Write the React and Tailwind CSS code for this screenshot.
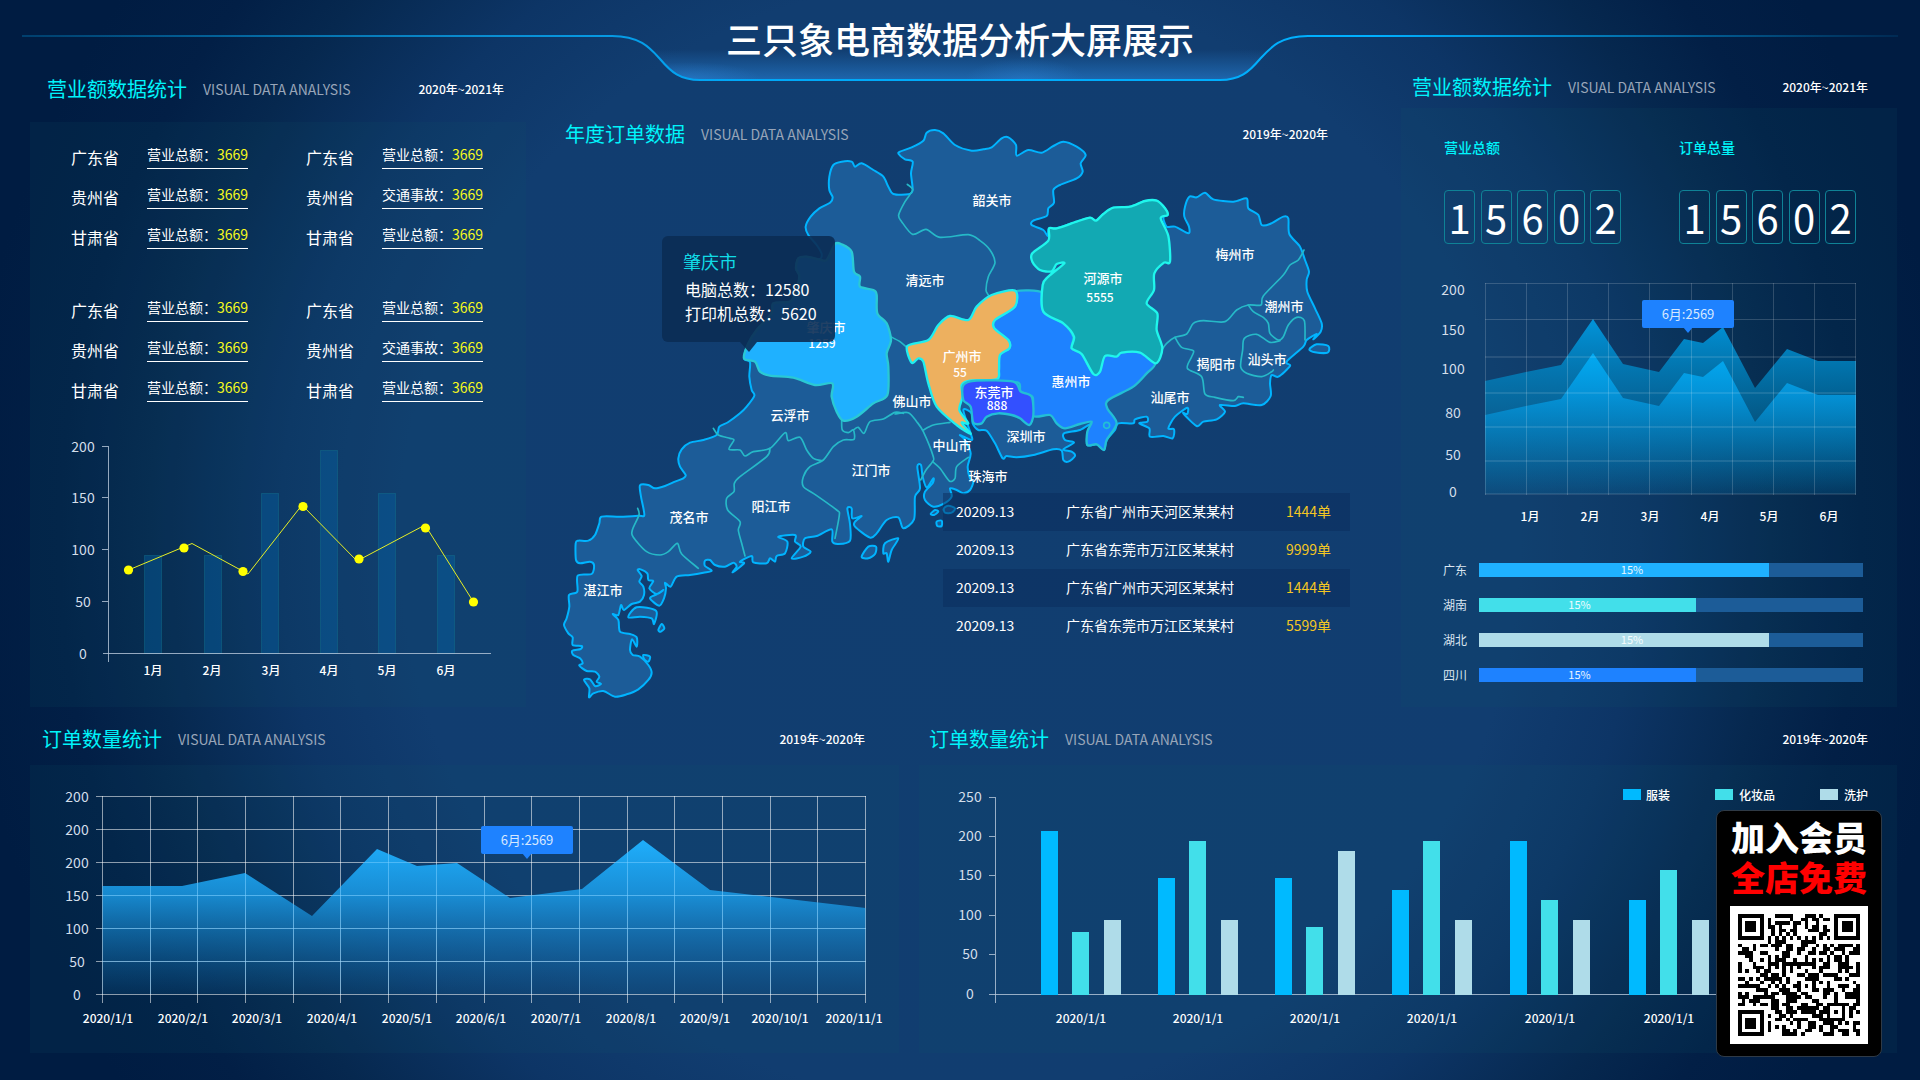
import React from "react";

const SALES = [
  [
    ["广东省", "营业总额：", "广东省", "营业总额："],
    ["贵州省", "营业总额：", "贵州省", "交通事故："],
    ["甘肃省", "营业总额：", "甘肃省", "营业总额："],
  ],
  [
    ["广东省", "营业总额：", "广东省", "营业总额："],
    ["贵州省", "营业总额：", "贵州省", "交通事故："],
    ["甘肃省", "营业总额：", "甘肃省", "营业总额："],
  ],
];

const ORDERS = [
  ["20209.13", "广东省广州市天河区某某村", "1444单"],
  ["20209.13", "广东省东莞市万江区某某村", "9999单"],
  ["20209.13", "广东省广州市天河区某某村", "1444单"],
  ["20209.13", "广东省东莞市万江区某某村", "5599单"],
];

const SHARES = [
  { name: "广东", fill: 75.5, tone: "bg-[#1fb1ff] pl-4" },
  { name: "湖南", fill: 56.5, tone: "bg-[#42dfea] pr-4" },
  { name: "湖北", fill: 75.5, tone: "bg-[#afdce9] pl-4" },
  { name: "四川", fill: 56.5, tone: "bg-[#1e82ff] pr-4" },
];

/* ---------- shared pieces ---------- */

function SectionTitle({ title, date, className = "" }) {
  return (
    <div className={"flex items-center " + className}>
      <h2 className="text-xl leading-7 text-[#00f4fb]">{title}</h2>
      <span className="ml-4 text-sm leading-7 text-[#98a5b8]">VISUAL DATA ANALYSIS</span>
      <time className="ml-auto text-xs leading-7 font-medium text-white">{date}</time>
    </div>
  );
}

function T({ x, y, children, className = "fill-white text-xs font-medium" }) {
  return (
    <text x={x} y={y} dy="0.37em" textAnchor="middle" className={className}>
      {children}
    </text>
  );
}

const AXIS = "fill-[#d3deea] text-sm";

function Flag({ x, y }) {
  return (
    <g>
      <rect x={x - 46} y={y} width="92" height="28" rx="2" fill="#1e82ff" />
      <path d={`M${x - 5} ${y + 27}h10l-5 6z`} fill="#1e82ff" />
      <T x={x} y={y + 14} className="fill-[#d6e8ff] text-[13px]">6月:2569</T>
    </g>
  );
}

const area = (pts, base) =>
  "M" + pts.map((p) => p.join(" ")).join("L") + `V${base}H${pts[0][0]}Z`;

/* ---------- header ---------- */

function Header() {
  const curve =
    "M22 36H612C640 36 650 48 660 59C671 72 680 80 700 80H1220C1240 80 1249 72 1260 59C1270 48 1280 36 1308 36H1898";
  return (
    <header className="relative flex h-[72px] justify-center">
      <svg className="absolute inset-x-0 top-0 w-full" viewBox="0 0 1920 84" aria-hidden="true">
        <defs>
          <linearGradient id="edge" gradientUnits="userSpaceOnUse" x1="22" y1="0" x2="1898" y2="0">
            <stop offset="0" stopColor="#00a8f0" stopOpacity="0.25" />
            <stop offset="0.25" stopColor="#0a9de4" stopOpacity="0.85" />
            <stop offset="0.38" stopColor="#00a8f8" />
            <stop offset="0.72" stopColor="#00b0ff" />
            <stop offset="1" stopColor="#00a8f0" stopOpacity="0.1" />
          </linearGradient>
          <linearGradient id="glow" x1="0" y1="0" x2="0" y2="1">
            <stop offset="0.3" stopColor="#2478c8" stopOpacity="0" />
            <stop offset="1" stopColor="#2478c8" stopOpacity="0.7" />
          </linearGradient>
          <radialGradient id="spot">
            <stop offset="0" stopColor="#2f8be0" stopOpacity="0.35" />
            <stop offset="1" stopColor="#2f8be0" stopOpacity="0" />
          </radialGradient>
          <clipPath id="trough">
            <path d="M612 36C640 36 650 48 660 59C671 72 680 80 700 80H1220C1240 80 1249 72 1260 59C1270 48 1280 36 1308 36Z" />
          </clipPath>
        </defs>
        <g clipPath="url(#trough)">
          <rect x="612" y="36" width="696" height="44" fill="url(#glow)" />
          <ellipse cx="1025" cy="80" rx="60" ry="22" fill="url(#spot)" />
          <ellipse cx="690" cy="78" rx="70" ry="16" fill="url(#spot)" />
        </g>
        <path d={curve} fill="none" stroke="url(#edge)" strokeWidth="2" />
      </svg>
      <h1 className="relative mt-[13px] text-4xl leading-[50px] font-medium text-white">三只象电商数据分析大屏展示</h1>
    </header>
  );
}

/* ---------- left column ---------- */

function SalesItem({ province, label }) {
  return (
    <div className="flex items-center justify-between">
      <span className="text-base leading-6">{province}</span>
      <span className="border-b border-white pb-1 text-sm leading-5">
        {label}
        <span className="text-[#f6f91c]">3669</span>
      </span>
    </div>
  );
}

function MonthlyChart() {
  const bars = [[144, 555], [204, 555], [261, 493], [320, 450], [378, 493], [437, 555]];
  const dots = [[128.5, 570], [184, 548], [243, 571.5], [303, 506.5], [359, 559], [425.5, 528], [473.5, 602]];
  const ticks = [[200, 446.5], [150, 497.5], [100, 549.5], [50, 601.5], [0, 653.5]];
  return (
    <svg className="mt-7 w-full" viewBox="30 430 496 260" role="img" aria-label="月度统计">
      {bars.map(([x, y]) => (
        <rect key={x} x={x + 0.5} y={y + 0.5} width="17" height={653 - y} fill="#0464a8" fillOpacity="0.4" stroke="#12708e" strokeOpacity="0.45" />
      ))}
      <g stroke="#b9c9dc" strokeOpacity="0.8">
        <path d="M108.5 446V662M103 653.5H491" />
        {ticks.slice(0, 4).map(([, y]) => (
          <path key={y} d={`M102 ${y}H108`} />
        ))}
      </g>
      <polyline points="128.5,570 192,543.5 248,574 302,505 357,561 425,525 473.5,602" fill="none" stroke="#e6ef25" />
      {dots.map(([x, y]) => (
        <circle key={x} cx={x} cy={y} r="4.6" fill="#ffff00" />
      ))}
      {ticks.map(([v, y]) => (
        <T key={v} x="83" y={y} className={AXIS}>{v}</T>
      ))}
      {[153, 212, 271, 329, 387, 446].map((x, i) => (
        <T key={x} x={x} y="671">{i + 1}月</T>
      ))}
    </svg>
  );
}

function LeftColumn() {
  return (
    <section className="flex flex-col">
      <SectionTitle title="营业额数据统计" date="2020年~2021年" className="h-[34px] pr-[22px] pl-[17px]" />
      <div className="mt-4 flex-1 bg-[#145a6e]/12 pt-[22px]">
        <div className="flex flex-col gap-12 pr-[43px] pl-[41px] text-white">
          {SALES.map((rows, g) => (
            <div key={g} className="grid grid-cols-2 gap-x-[58px] gap-y-[15px]">
              {rows.map(([a, b, c, d], i) => (
                <React.Fragment key={i}>
                  <SalesItem province={a} label={b} />
                  <SalesItem province={c} label={d} />
                </React.Fragment>
              ))}
            </div>
          ))}
        </div>
        <MonthlyChart />
      </div>
    </section>
  );
}

/* ---------- map ---------- */

const at = (dx, dy, s) =>
  s.trim().split(/\s+/).map((p) => {
    const [x, y] = p.split(",").map(Number);
    return [x + dx, y + dy];
  });
const north = (s) => at(0, 0, s);
const east = (s) => at(1080, 0, s);
const south = (s) => at(0, 870, s);

function smooth(pts, closed) {
  const n = pts.length;
  const get = (i) => (closed ? pts[(i + n) % n] : pts[Math.max(0, Math.min(n - 1, i))]);
  let d = `M${pts[0][0]} ${pts[0][1]}`;
  const last = closed ? n : n - 1;
  for (let i = 0; i < last; i++) {
    const [a, b, c, e] = [get(i - 1), get(i), get(i + 1), get(i + 2)];
    d += `C${(b[0] + (c[0] - a[0]) / 7).toFixed(1)} ${(b[1] + (c[1] - a[1]) / 7).toFixed(1)} ${(c[0] - (e[0] - b[0]) / 7).toFixed(1)} ${(c[1] - (e[1] - b[1]) / 7).toFixed(1)} ${c[0]} ${c[1]}`;
  }
  return closed ? d + "Z" : d;
}

const PROVINCE = [
  ...north(`880,165 868,200 868,240 878,262 870,278 838,295 812,320 797,350 805,375 830,405 845,432 838,448 800,440
    775,445 768,475 778,500 765,550 750,575 700,580 695,610 650,660 625,700 612,745 630,757 628,800 635,840 643,857 620,890`),
  ...south(`600,40 565,66 538,80 530,105 490,120 450,128 425,148 415,175 420,200 437,225 430,235 405,245 375,258 345,265
    325,255 300,256 303,290 313,345 295,347 240,350 185,350 178,370 165,405 145,422 115,422 107,430 108,480 120,490
    150,485 162,495 155,522 113,527 112,575 87,585 88,620 80,655 72,675 85,700 98,712 98,735 125,738 122,747 97,752
    100,765 120,775 128,790 118,797 140,813 165,815 178,830 170,845 183,852 165,858 150,838 132,840 148,865 147,892
    160,880 190,873 225,890 260,883 295,868 325,840 335,818 325,795 300,770 278,765 270,750 276,718 290,740 290,712
    270,702 240,695 235,660 218,642 235,645 243,615 252,630 275,612 300,605 312,585 310,560 298,545 305,528 293,510
    302,508 322,520 325,540 340,543 328,565 350,582 370,570 350,583 330,595 358,617 372,595 378,565 375,548 392,560
    410,530 450,525 490,518 515,512 495,498 495,482 510,480 525,495 555,500 580,488 590,500 578,517 612,490 600,485
    635,468 640,487 680,490 690,475 705,485 710,468 735,460 742,425 715,410 765,405 765,425 782,440 755,475 790,470
    812,455 790,440 795,415 830,408 875,388 877,425 895,432 930,422 930,372 922,325 935,325 937,355 965,348 945,365
    945,380 990,413 1010,400 1040,360 1075,352 1090,385 1122,358 1125,290 1140,265 1132,200 1143,195 1148,230
    1160,262 1180,235 1178,250 1155,275 1155,300 1180,320 1210,312 1235,290 1230,265 1250,270 1270,280 1290,270
    1300,245 1290,235 1283,200 1292,160`),
  ...east(`195,990 180,975 215,990 212,970 190,900 215,910 218,940 235,960 260,962 285,1000 308,1045 320,1038
    350,1042 400,1035 460,1018 485,1022 490,1050 505,1055 525,1038 515,1025 490,1018 522,998 495,990 492,970 540,960
    575,940 565,960 562,1005 590,1003 612,1020 620,990 645,960 655,940 700,940 705,928 740,920 742,935 718,940
    748,955 750,980 790,978 818,985 822,958 805,955 825,920 862,893 862,912 850,910 890,948 910,935 950,928 975,905
    960,885 1005,888 1030,880 1085,885 1112,858 1110,820 1115,795 1135,800 1170,768 1160,755 1210,710 1220,690
    1250,672 1240,688 1262,665 1265,640 1245,595 1222,545 1220,510 1227,485 1215,450 1200,410 1168,372 1165,325
    1150,320 1110,342 1085,345 1075,315 1045,295 1040,265 1000,275 940,268 915,248 890,262 868,260 855,290 853,320
    867,350 865,370 825,350 800,350 790,322 803,315 795,295 770,272 735,273 690,290 640,293 610,312 588,332 570,323
    530,335 470,355 447,355 443,378 430,360 395,345 400,332 440,318 445,295 462,278 460,240 480,225 530,205 548,185
    542,160 557,135 530,110 490,95 460,108 425,128 385,120 350,137 348,105 325,82 305,85 275,112 250,118 215,122
    165,105 130,70 105,60 80,68 70,92 35,112 0,125 -4,132 15,148 38,155 33,190 38,240 25,253`),
  ...north("1060,252 1045,230 1030,200 1000,180 965,160 945,170 935,155 905,155"),
];

const BORDERS = [
  east("22,223 38,240 15,275 -4,315 5,335 38,373 78,358 120,382 205,374 240,392 270,420 285,458 265,500 258,540 265,555"),
  east("345,545 400,545 428,552"),
  east("785,720 800,700 825,682 860,672 880,640 910,632 975,635 1010,600 1045,585 1083,585 1090,558 1150,495 1170,465 1195,450 1212,420"),
  east("1045,585 1060,605 1090,622 1105,640 1110,670 1135,690 1150,680 1165,645 1190,622 1213,632 1215,690"),
  east("1140,692 1110,697 1070,673 1033,685 1028,720 1022,770 1040,790 1085,800 1115,785 1120,780"),
  east("825,682 845,712 880,722 875,740 862,775 905,800 915,852 945,862 1000,872 1015,860 1030,862"),
  east("-15,912 25,908 50,935 70,965 100,1040 98,1055 78,1080 62,1110"),
  east("70,960 100,945 150,937"),
  east("98,1055 120,1075 148,1113 165,1105 170,1070 205,1042"),
  north("1052,680 1080,695 1100,712"),
  south("520,85 535,105 570,115 582,120 567,148 600,150 615,168 640,155 690,145 735,98 745,122 780,112 800,150 820,175 845,182"),
  south("690,145 680,170 600,230 583,250 582,275 560,295 563,330 600,365 595,390 605,430 615,468"),
  south("905,62 907,90 925,98 940,90 942,118 910,120 880,140 850,180 810,200 790,230 790,260 820,280 890,330 898,345 885,415"),
  south("940,90 955,82 972,100 990,65 1030,57 1065,37 1090,40"),
  south("293,325 297,345 277,390 280,412 320,455 360,465 385,455 412,430 425,462 475,505"),
];

const ISLANDS = [
  south("965,470 985,440 1008,440 1005,462 985,475"),
  south("1030,460 1035,430 1075,415 1055,450 1045,485 1040,460"),
  south("355,690 365,672 373,685 362,695"),
  south("310,765 330,770 325,785 313,778"),
  south("1172,342 1185,330 1195,335 1182,345"),
  south("1190,365 1205,362 1205,378 1192,378"),
  south("1212,325 1225,317 1245,325 1235,338 1215,338"),
  south("265,652 290,622 348,632 342,672 335,655 300,650"),
  east("1228,718 1250,703 1285,708 1283,728 1245,727"),
];

const REGIONS = [
  {
    fill: "#1e82ff",
    stroke: "#22bfd6",
    pts: east(`345,545 428,548 430,605 490,640 520,680 515,715 545,732 580,790 600,785 615,738 720,725 765,760
      740,790 700,830 625,870 622,895 650,940 620,990 612,1020 590,1003 562,1005 562,965 575,935 540,942 495,955
      470,940 450,915 400,918 398,862 362,845 355,818 290,808 300,735 328,715 325,690 283,655 285,630 345,590`),
  },
  {
    fill: "#1fb1ff",
    stroke: "#2ac9d4",
    pts: north(`885,402 905,403 935,425 942,485 960,500 960,530 1000,540 1010,555 1012,610 1040,640 1053,690 1040,730
      1045,770 1042,855 1000,880 950,920 910,932 890,905 875,860 877,820 825,825 760,803 690,797 660,785 645,755
      612,745 625,700 650,660 695,610 700,580 750,575 765,550 778,500 768,475 775,445 800,440 838,448 860,450`),
  },
  {
    fill: "#edb05f",
    stroke: "#1feef0",
    pts: east(`22,708 85,690 115,645 150,618 205,630 230,590 275,555 345,542 345,590 285,630 283,655 325,690 328,715
      300,735 297,780 290,808 210,812 185,825 188,860 178,900 205,940 185,938 212,972 170,945 110,890 85,820 70,755
      55,745 35,758`),
  },
  {
    fill: "#3350ff",
    stroke: "#22bfd6",
    pts: east(`190,825 230,812 340,815 362,845 395,860 400,915 388,945 360,925 335,915 295,910 260,920 245,940
      220,938 212,890 190,870`),
  },
  {
    fill: "#12a9b3",
    stroke: "#1ff6ec",
    pts: east(`447,355 470,355 530,335 570,323 588,332 610,312 640,293 690,290 735,273 770,272 795,295 803,315
      782,325 805,378 810,455 792,458 763,490 762,540 740,580 772,610 770,660 787,715 768,760 720,728 665,728 650,740
      615,738 600,785 580,792 545,732 515,715 522,680 490,640 430,605 428,525 445,500 493,460 470,462 455,484
      420,480 397,455 397,430 445,392`),
  },
];

const CITIES = [
  ["韶关市", 992, 200], ["清远市", 925, 280], ["河源市", 1103, 278], ["梅州市", 1235, 254], ["潮州市", 1284, 306],
  ["揭阳市", 1216, 364], ["汕头市", 1267, 359], ["汕尾市", 1170, 397], ["惠州市", 1071, 381], ["广州市", 962, 356],
  ["东莞市", 994, 392], ["佛山市", 912, 401], ["中山市", 952, 445], ["深圳市", 1026, 436], ["珠海市", 988, 476],
  ["肇庆市", 826, 327], ["云浮市", 790, 415], ["江门市", 871, 470], ["阳江市", 771, 506], ["茂名市", 689, 517],
  ["湛江市", 603, 590],
];
const COUNTS = [["5555", 1100, 298], ["55", 960, 373], ["888", 997, 406], ["1259", 822, 344]];

function GuangdongMap() {
  return (
    <svg className="col-start-1 row-start-1 w-full" viewBox="526 72 875 635" role="img" aria-label="广东省地图">
      <g transform="translate(540 110) scale(0.33333)" strokeLinejoin="round" strokeLinecap="round">
        <path d={smooth(PROVINCE, true)} fill="#1c5c98" stroke="#00b4ff" strokeWidth="6" />
        {ISLANDS.map((p, i) => (
          <path key={i} d={smooth(p, true)} fill="#1c5c98" stroke="#00b4ff" strokeWidth="6" />
        ))}
        {BORDERS.map((p, i) => (
          <path key={i} d={smooth(p, false)} fill="none" stroke="#26b9c8" strokeWidth="5" />
        ))}
        {REGIONS.map((r) => (
          <path key={r.fill} d={smooth(r.pts, true)} fill={r.fill} stroke={r.stroke} strokeWidth="7" />
        ))}
        <circle cx="1700" cy="946" r="9" fill="#1e82ff" stroke="#22bfd6" strokeWidth="5" />
      </g>
      {CITIES.map(([n, x, y]) => (
        <T key={n} x={x} y={y} className="fill-white text-[13px] font-medium">{n}</T>
      ))}
      {COUNTS.map(([n, x, y]) => (
        <T key={n} x={x} y={y} className="fill-white text-xs font-medium">{n}</T>
      ))}
    </svg>
  );
}

function CenterColumn() {
  return (
    <section className="grid">
      <GuangdongMap />
      <div className="relative col-start-1 row-start-1 flex flex-col">
        <SectionTitle title="年度订单数据" date="2019年~2020年" className="mt-[46px] h-8 pr-[73px] pl-[39px]" />
        <div className="relative mt-[86px] ml-[136px] self-start rounded-md bg-[#0b2c54]/90 pt-[13px] pr-[18px] pb-[17px] pl-[21px] text-white">
          <h3 className="text-lg leading-6 text-[#10dbe6]">肇庆市</h3>
          <p className="mt-1 pl-[2px] text-base leading-6">电脑总数：12580</p>
          <p className="pl-[2px] text-base leading-6">打印机总数：5620</p>
          <svg className="absolute top-full left-[78px]" width="18" height="10" viewBox="0 0 18 10" aria-hidden="true">
            <path d="M0 0H17L9 10Z" fill="#0b2c54" fillOpacity="0.9" />
          </svg>
        </div>
        <table className="mt-[151px] mr-[51px] ml-[417px] text-sm text-white">
          <tbody>
            {ORDERS.map(([day, place, count], i) => (
              <tr key={i} className="h-[38px] odd:bg-[#0a2c5c]/50">
                <td className="w-[123px] pb-0.5 pl-[13px] leading-5">{day}</td>
                <td className="pb-0.5 leading-5">{place}</td>
                <td className="pr-[19px] pb-0.5 text-right leading-5 text-[#f3c623]">{count}</td>
              </tr>
            ))}
          </tbody>
        </table>
      </div>
    </section>
  );
}

/* ---------- right column ---------- */

function Counter({ label }) {
  return (
    <div className="w-[177px]">
      <h3 className="text-sm leading-5 font-medium text-[#00f4fb]">{label}</h3>
      <div className="mt-[33px] flex justify-between text-white">
        {"15602".split("").map((n, i) => (
          <span key={i} className="flex h-[54px] w-[31px] items-center justify-center rounded-[4px] border border-[#0f8296] text-[40px] leading-none">
            {n}
          </span>
        ))}
      </div>
    </div>
  );
}

const TREND = [
  [1485, 381], [1526, 372], [1561, 365], [1593, 319], [1623, 364], [1659, 372], [1684, 339], [1703, 343],
  [1723, 327], [1755, 388], [1787, 349], [1818, 361], [1856, 361],
];

function TrendChart() {
  return (
    <svg className="mt-[31px] w-full" viewBox="1401 275 496 255" role="img" aria-label="趋势统计">
      <defs>
        <linearGradient id="far" gradientUnits="userSpaceOnUse" x1="0" y1="319" x2="0" y2="494">
          <stop offset="0" stopColor="#009ce4" stopOpacity="0.92" />
          <stop offset="0.3" stopColor="#0088c6" stopOpacity="0.75" />
          <stop offset="1" stopColor="#0080b0" stopOpacity="0.05" />
        </linearGradient>
        <linearGradient id="near" gradientUnits="userSpaceOnUse" x1="0" y1="353" x2="0" y2="494">
          <stop offset="0" stopColor="#02aaf2" />
          <stop offset="0.3" stopColor="#0499e0" stopOpacity="0.85" />
          <stop offset="1" stopColor="#0478b4" stopOpacity="0.15" />
        </linearGradient>
      </defs>
      <path d={area(TREND, 494)} fill="url(#far)" />
      <path d={area(TREND.map(([x, y]) => [x, y + 34]), 494)} fill="url(#near)" />
      <g stroke="#ffffff" strokeOpacity="0.17">
        {[1485, 1526, 1567, 1608, 1649, 1691, 1732, 1773, 1814, 1855].map((x) => (
          <path key={x} d={`M${x + 0.5} 283V495`} />
        ))}
        {[283, 319].map((y) => (
          <path key={y} d={`M1485 ${y + 0.5}H1856`} />
        ))}
      </g>
      <g stroke="#ffffff" strokeOpacity="0.1" strokeWidth="2">
        {[357, 393, 427, 461, 494].map((y) => (
          <path key={y} d={`M1485 ${y}H1856`} />
        ))}
      </g>
      <Flag x={1688} y={300} />
      {[[200, 290], [150, 330], [100, 369], [80, 413], [50, 455], [0, 492]].map(([v, y]) => (
        <T key={v} x="1453" y={y} className={AXIS}>{v}</T>
      ))}
      {[1530, 1590, 1650, 1710, 1769, 1829].map((x, i) => (
        <T key={x} x={x} y="517">{i + 1}月</T>
      ))}
    </svg>
  );
}

function RightColumn() {
  return (
    <section className="flex flex-col">
      <SectionTitle title="营业额数据统计" date="2020年~2021年" className="h-[30px] pr-[29px] pl-[11px]" />
      <div className="mt-1.5 flex-1 bg-[#145a6e]/12 pt-[29px]">
        <div className="flex justify-between pr-[41px] pl-[43px]">
          <Counter label="营业总额" />
          <Counter label="订单总量" />
        </div>
        <TrendChart />
        <ul className="mt-[30px] flex flex-col gap-[15px] pr-[34px] pl-[42px] text-xs text-[#dbe6f1]">
          {SHARES.map((s) => (
            <li key={s.name} className="flex items-center gap-3">
              <span className="leading-5">{s.name}</span>
              <div className="flex h-3.5 flex-1 bg-[#1c5c98]">
                <div className={"text-center text-[11px] leading-[13px] text-white/90 " + s.tone} style={{ width: `${s.fill}%` }}>
                  15%
                </div>
              </div>
            </li>
          ))}
        </ul>
      </div>
    </section>
  );
}

/* ---------- bottom row ---------- */

const DAILY = [
  [102.5, 886], [182, 886], [245, 873], [312, 916], [377, 849], [417, 866], [457, 863], [510, 898], [582, 889],
  [643, 840], [710, 890], [780, 898], [865.5, 908],
];

function DailyChart() {
  const cols = [102, 150, 197, 245, 293, 340, 388, 436, 484, 531, 579, 627, 674, 722, 770, 817, 865];
  const rows = [796, 829, 862, 895, 928, 961, 994];
  const marks = [200, 200, 200, 150, 100, 50, 0];
  return (
    <svg className="w-full" viewBox="30 765 869 288" role="img" aria-label="订单数量">
      <defs>
        <linearGradient id="daily" gradientUnits="userSpaceOnUse" x1="0" y1="840" x2="0" y2="994">
          <stop offset="0" stopColor="#1fb1ff" stopOpacity="0.98" />
          <stop offset="0.35" stopColor="#1ca2f0" stopOpacity="0.8" />
          <stop offset="1" stopColor="#1478c0" stopOpacity="0.12" />
        </linearGradient>
      </defs>
      <g stroke="#ffffff" strokeOpacity="0.55">
        {cols.map((x) => (
          <path key={x} d={`M${x + 0.5} 796V1003`} />
        ))}
        {rows.map((y) => (
          <path key={y} d={`M96 ${y + 0.5}H866`} />
        ))}
      </g>
      <path d={area(DAILY, 994)} fill="url(#daily)" />
      <g stroke="#8fd4ff" strokeOpacity="0.35">
        <clipPath id="inside">
          <path d={area(DAILY, 994)} />
        </clipPath>
        <g clipPath="url(#inside)">
          {cols.map((x) => (
            <path key={x} d={`M${x + 0.5} 796V994`} />
          ))}
          {rows.map((y) => (
            <path key={y} d={`M102 ${y + 0.5}H866`} />
          ))}
        </g>
      </g>
      <Flag x={527} y={826} />
      {rows.map((y, i) => (
        <T key={y} x="77" y={y + 1} className={AXIS}>{marks[i]}</T>
      ))}
      {[108, 183, 257, 332, 407, 481, 556, 631, 705, 780, 854].map((x, i) => (
        <T key={x} x={x} y="1019">{`2020/${i + 1}/1`}</T>
      ))}
    </svg>
  );
}

const GROUPS = [
  [1041, 831, 932, 920], [1158, 878, 841, 920], [1275, 878, 927, 851],
  [1392, 890, 841, 920], [1510, 841, 900, 920], [1629, 900, 870, 920],
];
const SERIES = ["#00baff", "#42dfea", "#afdce9"];

function CategoryChart() {
  const ticks = [[250, 797], [200, 836], [150, 875], [100, 915], [50, 954], [0, 994]];
  return (
    <svg className="w-full" viewBox="919 765 978 288" role="img" aria-label="分类订单数量">
      <g stroke="#b9c9dc" strokeOpacity="0.8">
        <path d="M995.5 797V1003M989 994.5H1840" />
        {ticks.slice(0, 5).map(([v, y]) => (
          <path key={v} d={`M989 ${y + 0.5}H995`} />
        ))}
      </g>
      {GROUPS.map(([x, ...tops]) =>
        tops.map((y, k) => (
          <rect key={x + k} x={x + [0, 31, 63][k]} y={y} width="17" height={995 - y} fill={SERIES[k]} />
        ))
      )}
      {ticks.map(([v, y]) => (
        <T key={v} x="970" y={y} className={AXIS}>{v}</T>
      ))}
      {GROUPS.map(([x]) => (
        <T key={x} x={x + 40} y="1019">2020/1/1</T>
      ))}
      {[["服装", 1623, 1658], ["化妆品", 1715, 1757], ["洗护", 1820, 1856]].map(([n, x, tx], k) => (
        <g key={n}>
          <rect x={x} y="789" width="18" height="11" fill={SERIES[k]} />
          <T x={tx} y="796">{n}</T>
        </g>
      ))}
    </svg>
  );
}

/* ---------- membership code ---------- */

function codeModules() {
  const n = 33;
  const cells = [];
  const finder = (x, y) => {
    const m = Math.max(Math.abs(x - 3), Math.abs(y - 3));
    return m === 3 || m <= 1;
  };
  let seed = 20200913;
  for (let y = 0; y < n; y++) {
    for (let x = 0; x < n; x++) {
      seed = (seed * 1103515245 + 12345) % 2147483648;
      let on = ((seed >> 12) & 255) < 126;
      if (x < 8 && y < 8) on = x < 7 && y < 7 && finder(x, y);
      else if (x > 24 && y < 8) on = x > 25 && y < 7 && finder(x - 26, y);
      else if (x < 8 && y > 24) on = x < 7 && y > 25 && finder(x, y - 26);
      else if (x >= 24 && x <= 28 && y >= 24 && y <= 28) on = Math.max(Math.abs(x - 26), Math.abs(y - 26)) !== 1;
      else if (x === 6 || y === 6) on = (x + y) % 2 === 0;
      if (on) cells.push(`M${x} ${y}h1v1h-1z`);
    }
  }
  return cells.join("");
}

function MemberCard() {
  return (
    <aside className="absolute right-[38px] bottom-[23px] rounded-lg border border-[#2f3a46] bg-black px-[13px] pt-1.5 pb-3 text-center text-[34px] leading-10 font-black">
      <p className="text-white">加入会员</p>
      <p className="text-[#ff0000]">全店免费</p>
      <div className="mt-[9px] bg-white p-2">
        <svg className="w-[122px]" viewBox="0 0 33 33" shapeRendering="crispEdges" role="img" aria-label="会员二维码">
          <path d={codeModules()} fill="#000000" />
        </svg>
      </div>
    </aside>
  );
}

export default function App() {
  return (
    <div className="relative min-h-screen bg-[#001c42] bg-[radial-gradient(circle_at_center,#113e70_0,#113d70_560px,#0d3566_680px,#06284f_810px,#021f46_900px,#001c42_1000px)] font-['Noto_Sans_CJK_SC',sans-serif]">
      <Header />
      <main className="pr-[23px] pb-[27px] pl-[30px]">
        <div className="grid grid-cols-[496fr_875fr_496fr]">
          <LeftColumn />
          <CenterColumn />
          <RightColumn />
        </div>
        <div className="mt-4 grid grid-cols-[869fr_978fr] gap-5">
          <section>
            <SectionTitle title="订单数量统计" date="2019年~2020年" className="h-8 pr-[34px] pl-3" />
            <div className="mt-2.5 flex bg-[#145a6e]/12">
              <DailyChart />
            </div>
          </section>
          <section>
            <SectionTitle title="订单数量统计" date="2019年~2020年" className="h-8 pr-[29px] pl-2.5" />
            <div className="mt-2.5 flex bg-[#145a6e]/12">
              <CategoryChart />
            </div>
          </section>
        </div>
      </main>
      <MemberCard />
    </div>
  );
}
